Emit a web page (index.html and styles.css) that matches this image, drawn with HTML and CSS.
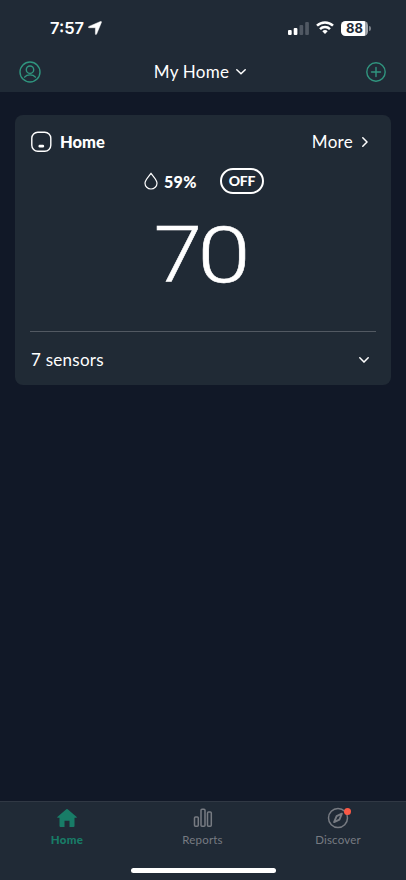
FILE: index.html
```html
<!DOCTYPE html>
<html lang="en">
<head>
<meta charset="utf-8">
<meta name="viewport" content="width=device-width, initial-scale=1">
<title>My Home</title>
<link rel="stylesheet" href="styles.css">
</head>
<body>
<div class="app">
  <header class="header">
    <div class="status">
      <div class="clock"><span>7:57</span>
        <svg width="14" height="14" viewBox="0 0 14 14"><path d="M12.500.5c.7-.3 1.200.2.900.9L8.600 13.100c-.3.700-1.200.6-1.200-.2V6.700H1.200C.3 6.700.2 5.800 1 5.400z" fill="#fff" stroke="#fff" stroke-width=".5"/></svg>
      </div>
      <div class="indicators">
        <svg class="signal" width="21" height="13" viewBox="0 0 21 13"><rect x="0" y="8" width="3.700" height="5" rx="1" fill="#fff"/><rect x="5.700" y="6" width="3.700" height="7" rx="1" fill="#fff"/><rect x="11.500" y="3" width="3.700" height="10" rx="1" fill="#505863"/><rect x="17.200" y="0" width="3.700" height="13" rx="1" fill="#505863"/></svg>
        <svg class="wifi" width="18" height="13" viewBox="0 0 18 13" fill="none" stroke="#fff" stroke-width="2.500"><path d="M1 4.700a11.500 11.500 0 0 1 16 0M4 8.100a7.200 7.200 0 0 1 10 0"/><path d="M9 13 6.300 10.300a4 4 0 0 1 5.400 0z" fill="#fff" stroke="none"/></svg>
        <div class="battery"><span class="charge">88</span><span class="tip"></span></div>
      </div>
    </div>
    <nav class="topbar">
      <svg width="22" height="22" viewBox="0 0 22 22" fill="none" stroke="#30957f" stroke-width="1.400"><circle cx="11" cy="11" r="10"/><circle cx="11" cy="8.700" r="3.700"/><path d="M5.600 16.100c1.300-1.600 3-2.200 5.400-2.200s4.100.6 5.400 2.200" stroke-linecap="round"/></svg>
      <div class="title"><span>My Home</span>
        <svg width="10" height="6" viewBox="0 0 10 6" fill="none" stroke="#fff" stroke-width="1.500" stroke-linecap="round"><path d="m.8.8 4.200 4 4.200-4"/></svg>
      </div>
      <svg width="20" height="20" viewBox="0 0 20 20" fill="none" stroke="#30957f" stroke-width="1.400" stroke-linecap="round"><circle cx="10" cy="10" r="9.200"/><path d="M10 5.500v9M5.500 10h9"/></svg>
    </nav>
  </header>
  <main class="main">
    <section class="card">
      <div class="card-head">
        <svg width="22" height="22" viewBox="0 0 22 22"><rect x="1.800" y="1.300" width="19" height="19" rx="6" fill="none" stroke="#fff" stroke-width="1.400"/><rect x="8.500" y="13.700" width="5.600" height="2.800" rx="1.200" fill="#fff"/></svg>
        <h2 class="name">Home</h2>
        <span class="more">More</span>
        <svg width="6" height="10" viewBox="0 0 6 10" fill="none" stroke="#fff" stroke-width="1.500" stroke-linecap="round"><path d="m.8.8 4.200 4.200L.8 9.200"/></svg>
      </div>
      <div class="readings">
        <svg width="14" height="18" viewBox="0 0 14 18" fill="none" stroke="#fff" stroke-width="1.200"><path d="M7 1.200C5.300 4 1 7.600 1 11.200a6 5.800 0 0 0 12 0C13 7.600 8.700 4 7 1.200z" stroke-linejoin="round"/></svg>
        <span class="humidity">59%</span>
        <span class="mode">OFF</span>
      </div>
      <div class="temperature"><span class="tens">7</span><span class="ones">0</span></div>
      <div class="sensors"><span>7 sensors</span>
        <svg width="10" height="6" viewBox="0 0 10 6" fill="none" stroke="#fff" stroke-width="1.500" stroke-linecap="round"><path d="m.8.8 4.200 4.200L9.200.8"/></svg>
      </div>
    </section>
  </main>
  <footer class="footer">
    <nav class="tabs">
      <div class="tab active">
        <svg width="22" height="22" viewBox="0 0 22 22"><path d="M10.300 2.200q.7-.5 1.400 0l9 7.700q.5.6-.3.900H18.500v8.200q0 1-1 1H13.500v-6.300h-5V20H4.500q-1 0-1-1v-8.200H1.600q-.8-.3-.3-.9z" fill="#187c67"/></svg>
        <span>Home</span>
      </div>
      <div class="tab">
        <svg width="22" height="22" viewBox="0 0 22 22" fill="none" stroke="#777b82" stroke-width="1.500"><rect x="2.500" y="10" width="3.800" height="9.300" rx="1"/><rect x="9" y="2.200" width="4" height="17.100" rx="1"/><rect x="15.500" y="5" width="3.800" height="14.300" rx="1"/></svg>
        <span>Reports</span>
      </div>
      <div class="tab">
        <div class="compass"><svg width="22" height="22" viewBox="0 0 22 22"><circle cx="11" cy="11" r="9.500" fill="none" stroke="#777b82" stroke-width="1.500"/><path d="m14.900 6.700-5.300 2.400-2.500 6 5.300-2.400z" fill="none" stroke="#777b82" stroke-width="1.900" stroke-linejoin="round"/></svg><i class="badge"></i></div>
        <span>Discover</span>
      </div>
    </nav>
    <div class="indicator"></div>
  </footer>
</div>
</body>
</html>
```
FILE: styles.css
```css
* { box-sizing: border-box; }
body { margin: 0; background: #111827; color: #fff; font-family: Lato, "Liberation Sans", sans-serif; }
svg { display: block; flex: none; }
.app { height: 880px; display: flex; flex-direction: column; overflow: hidden; }
.header { height: 92px; background: #202a36; flex: none; }
.status { height: 52px; padding: 4px 35px 0 50px; display: flex; align-items: center; justify-content: space-between; }
.clock { display: flex; align-items: center; gap: 4px; font: 600 16.500px/20px Inter, sans-serif; }
.indicators { display: flex; align-items: center; gap: 7px; }
.wifi { margin-top: -1px; }
.battery { display: flex; align-items: center; gap: 1px; }
.charge { width: 27px; height: 15px; border-radius: 4.500px; background: linear-gradient(90deg, #fff 88%, #a0a4a9 88%); color: #212a36; font: 700 13px/15px Inter, sans-serif; text-align: center; }
.tip { width: 2px; height: 5px; border-radius: 0 2px 2px 0; background: #7b8189; }
.topbar { height: 40px; padding: 0 20px 0 19px; display: flex; align-items: center; justify-content: space-between; }
.title { display: flex; align-items: center; gap: 7px; margin-right: 7px; font-size: 17px; line-height: 22px; letter-spacing: .25px; }
.main { flex: 1; padding: 23px 15px; }
.card { height: 270px; border-radius: 8px; background: #202a35; padding: 15px 15px 0; display: flex; flex-direction: column; }
.card-head { height: 24px; display: flex; align-items: center; padding-right: 8px; }
.name { margin: 0 auto 0 8px; font-size: 16.500px; line-height: 22px; font-weight: 900; }
.more { font-size: 17px; line-height: 22px; letter-spacing: .3px; margin-right: 9px; }
.readings { height: 26px; margin-top: 14px; padding-left: 114px; display: flex; align-items: center; }
.humidity { width: 56px; margin-left: 6px; font-size: 16px; font-weight: 900; letter-spacing: .3px; }
.mode { width: 44px; height: 26px; border: 2px solid #fff; border-radius: 13px; font-size: 14px; line-height: 22px; font-weight: 900; text-align: center; letter-spacing: -.2px; }
.temperature { height: 90px; margin-top: 16px; padding-left: 126px; display: flex; font: 300 77px/92px Roboto, sans-serif; -webkit-text-stroke: .5px #fff; }
.tens, .ones { width: 44px; display: flex; justify-content: center; }
.tens { transform: scaleX(1.13); }
.ones { margin-left: 2px; transform: scaleX(1.24); }
.sensors { height: 54px; margin-top: 31px; border-top: 1px solid #525962; padding: 2px 7px 0 1px; display: flex; align-items: center; justify-content: space-between; font-size: 17px; letter-spacing: .25px; }
.footer { height: 79px; flex: none; background: #202a36; border-top: 1px solid #303844; }
.tabs { height: 66px; padding-top: 5px; display: grid; grid-template-columns: 134px 137px 134px; }
.tab { display: flex; flex-direction: column; align-items: center; gap: 3px; color: #777b82; font-size: 11.500px; line-height: 16px; letter-spacing: .2px; }
.active { color: #187c67; font-weight: 900; letter-spacing: .3px; }
.compass { position: relative; }
.badge { position: absolute; left: 17px; top: 1px; width: 7px; height: 7px; border-radius: 50%; background: #fa5946; }
.indicator { width: 145px; height: 5px; border-radius: 3px; margin: 0 auto; background: #fff; }
```
